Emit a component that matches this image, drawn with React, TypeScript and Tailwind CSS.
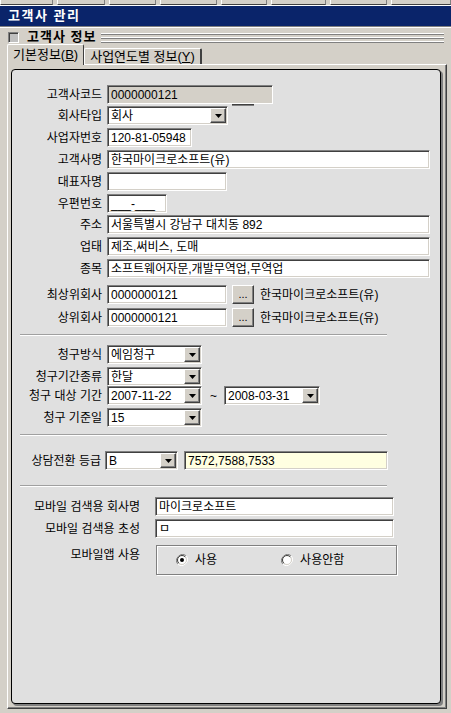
import type { ReactNode } from 'react';

const sunken =
  'border border-t-[#808080] border-l-[#808080] border-b-white border-r-white shadow-[inset_1px_1px_0_#404040,inset_-1px_-1px_0_#d4d0c8]';
const raised =
  'border border-t-white border-l-white border-b-[#404040] border-r-[#404040] shadow-[inset_-1px_-1px_0_#808080] bg-[#d4d0c8]';

function TextBox({ w, value = '', bg = 'bg-white' }: { w: string; value?: string; bg?: string }) {
  return (
    <div className={`${sunken} ${bg} ${w} h-[19px] flex items-center pl-[3px] text-[12px] leading-none whitespace-nowrap overflow-hidden`}>
      {value}
    </div>
  );
}

function Combo({ w, value }: { w: string; value: string }) {
  return (
    <div className={`${sunken} bg-white ${w} h-[19px] flex items-stretch p-[1px]`}>
      <span className="flex-1 flex items-center pl-[2px] text-[12px] leading-none whitespace-nowrap">{value}</span>
      <span className={`${raised} w-[16px] flex items-center justify-center`}>
        <svg width="7" height="4" viewBox="0 0 7 4">
          <path d="M0 0h7L3.5 4z" fill="#000" />
        </svg>
      </span>
    </div>
  );
}

function Row({ label, children, className = '' }: { label: string; children: ReactNode; className?: string }) {
  return (
    <div className={`flex items-center h-[19px] ${className}`}>
      <span className="w-[90px] text-right whitespace-nowrap">{label}</span>
      <div className="ml-[5px] flex items-center">{children}</div>
    </div>
  );
}

function Separator({ className = '' }: { className?: string }) {
  return <div className={`ml-[8px] w-[367px] h-[2px] border-t border-[#a0a0a0] border-b border-b-white ${className}`} />;
}

function Radio({ checked }: { checked?: boolean }) {
  return (
    <svg width="12" height="12" viewBox="0 0 12 12">
      <path d="M10.2 1.8A6 6 0 0 0 1.8 10.2" fill="none" stroke="#808080" strokeWidth="1" />
      <path d="M1.8 10.2A6 6 0 0 0 10.2 1.8" fill="none" stroke="#ffffff" strokeWidth="1" />
      <circle cx="6" cy="6" r="4.5" fill="#fff" stroke="#d4d0c8" strokeWidth="1" />
      <path d="M9.2 2.8A4.5 4.5 0 0 0 2.8 9.2" fill="none" stroke="#404040" strokeWidth="1" />
      {checked && <circle cx="6" cy="6" r="2" fill="#000" />}
    </svg>
  );
}

export default function App() {
  const topButtons = [54, 50, 48, 58, 48, 56, 58, 62];

  return (
    <div className="w-[451px] h-[713px] bg-[#d4d0c8] overflow-hidden font-['Liberation_Sans','Noto_Sans_CJK_KR',sans-serif] text-[12px] text-black">
      {/* toolbar remnants */}
      <div className="flex h-[5px] gap-[4px]">
        {topButtons.map((w, i) => (
          <div key={i} className="h-full border-b border-b-[#404040] border-r border-r-[#808080] border-l border-l-white" style={{ width: w }} />
        ))}
      </div>
      <div className="h-px bg-white" />

      {/* title bar */}
      <div className="h-[20px] bg-[#0a246a] flex items-center pl-[8px] text-white font-bold text-[13px] tracking-[1.5px]">고객사 관리</div>
      <div className="h-px bg-[#808080]" />
      <div className="h-px bg-white" />

      {/* section header */}
      <div className="flex items-center h-[12px] mt-[3px] pl-[8px]">
        <div className="w-[11px] h-[11px] border border-t-[#808080] border-l-[#808080] border-b-white border-r-white bg-[#c0c0c0] shadow-[inset_1px_1px_0_#404040]" />
        <span className="ml-[8px] font-bold text-[13px] tracking-[1px] whitespace-nowrap">고객사 정보</span>
        <div className="ml-[5px] mt-[2px] w-[343px] flex flex-col gap-[2px]">
          <div className="h-[2px] border-t border-t-white border-b border-b-[#808080]" />
          <div className="h-[2px] border-t border-t-white border-b border-b-[#808080]" />
          <div className="h-[2px] border-t border-t-white border-b border-b-[#808080]" />
        </div>
      </div>

      {/* tabs */}
      <div className="flex items-end h-[21px] pl-[7px]">
        <div className="relative z-10 h-[21px] -mb-px px-[5px] flex items-center bg-[#d4d0c8] border-t border-l border-white border-r border-r-[#404040] rounded-t-[2px] whitespace-nowrap text-[13px]">
          기본정보(<u>B</u>)
        </div>
        <div className="h-[16px] px-[5px] flex items-center border-t border-l border-white border-r-2 border-r-[#404040] rounded-t-[2px] whitespace-nowrap text-[13px]">
          사업연도별 정보(<u>Y</u>)
        </div>
      </div>

      {/* tab page */}
      <div className="ml-[7px] w-[440px] h-[645px] border border-t-white border-l-white border-b-[#404040] border-r-[#404040] shadow-[inset_-1px_-1px_0_#808080] pt-[4px] pl-[3px]">
        <div className="w-[430px] h-[635px] rounded-[4px] border border-black bg-[#e0e0e0] shadow-[2px_2px_0_#808080] pt-[15px] flex flex-col">
          <Row label="고객사코드">
            <TextBox w="w-[166px]" value="0000000121" bg="bg-[#d4d0c8]" />
          </Row>
          <Row label="회사타입" className="mt-[2px]">
            <Combo w="w-[121px]" value="회사" />
            <div className="ml-[4px] w-[22px] h-[2px] self-start -mt-[2px] bg-[#808080] border-t border-[#404040]" />
          </Row>
          <Row label="사업자번호" className="mt-[3px]">
            <TextBox w="w-[85px]" value="120-81-05948" />
          </Row>
          <Row label="고객사명" className="mt-[3px]">
            <TextBox w="w-[323px]" value="한국마이크로소프트(유)" />
          </Row>
          <Row label="대표자명" className="mt-[3px]">
            <TextBox w="w-[120px]" />
          </Row>
          <Row label="우편번호" className="mt-[3px]">
            <TextBox w="w-[60px]" value="___-___" />
          </Row>
          <Row label="주소" className="mt-[2px]">
            <TextBox w="w-[323px]" value="서울특별시 강남구 대치동 892" />
          </Row>
          <Row label="업태" className="mt-[3px]">
            <TextBox w="w-[323px]" value="제조,써비스, 도매" />
          </Row>
          <Row label="종목" className="mt-[3px]">
            <TextBox w="w-[323px]" value="소프트웨어자문,개발무역업,무역업" />
          </Row>
          <Row label="최상위회사" className="mt-[7px]">
            <TextBox w="w-[120px]" value="0000000121" />
            <div className={`${raised} ml-[5px] w-[22px] h-[19px] flex items-end justify-center pb-[3px] text-[11px] leading-none`}>...</div>
            <span className="ml-[6px] whitespace-nowrap">한국마이크로소프트(유)</span>
          </Row>
          <Row label="상위회사" className="mt-[4px]">
            <TextBox w="w-[120px]" value="0000000121" />
            <div className={`${raised} ml-[5px] w-[22px] h-[19px] flex items-end justify-center pb-[3px] text-[11px] leading-none`}>...</div>
            <span className="ml-[6px] whitespace-nowrap">한국마이크로소프트(유)</span>
          </Row>

          <Separator className="mt-[7px]" />

          <Row label="청구방식" className="mt-[9px]">
            <Combo w="w-[95px]" value="에임청구" />
          </Row>
          <Row label="청구기간종류" className="mt-[3px]">
            <Combo w="w-[95px]" value="한달" />
          </Row>
          <Row label="청구 대상 기간" className="mt-[0px]">
            <Combo w="w-[95px]" value="2007-11-22" />
            <span className="ml-[8px]">~</span>
            <span className="ml-[7px]">
              <Combo w="w-[96px]" value="2008-03-31" />
            </span>
          </Row>
          <Row label="청구 기준일" className="mt-[3px]">
            <Combo w="w-[95px]" value="15" />
          </Row>

          <Separator className="mt-[7px]" />

          <div className="flex items-center h-[19px] mt-[15px]">
            <span className="w-[89px] text-right whitespace-nowrap">상담전환 등급</span>
            <div className="ml-[4px]">
              <Combo w="w-[73px]" value="B" />
            </div>
            <div className="ml-[6px]">
              <TextBox w="w-[204px]" value="7572,7588,7533" bg="bg-[#ffffe1]" />
            </div>
          </div>

          <Separator className="mt-[15px]" />

          <div className="flex items-center h-[19px] mt-[10px]">
            <span className="w-[128px] text-right whitespace-nowrap">모바일 검색용 회사명</span>
            <div className="ml-[15px]">
              <TextBox w="w-[239px]" value="마이크로소프트" />
            </div>
          </div>
          <div className="flex items-center h-[19px] mt-[3px]">
            <span className="w-[128px] text-right whitespace-nowrap">모바일 검색용 초성</span>
            <div className="ml-[15px]">
              <TextBox w="w-[239px]" value="ㅁ" />
            </div>
          </div>
          <div className="flex items-start mt-[7px]">
            <span className="w-[128px] text-right whitespace-nowrap pt-[1px]">모바일앱 사용</span>
            <div className="ml-[16px] w-[241px] h-[30px] border border-[#808080] shadow-[inset_1px_1px_0_#fff,1px_1px_0_#fff] flex items-center pl-[19px]">
              <Radio checked />
              <span className="ml-[7px]">사용</span>
              <span className="ml-[64px] flex items-center">
                <Radio />
              </span>
              <span className="ml-[7px]">사용안함</span>
            </div>
          </div>
        </div>
      </div>
    </div>
  );
}
